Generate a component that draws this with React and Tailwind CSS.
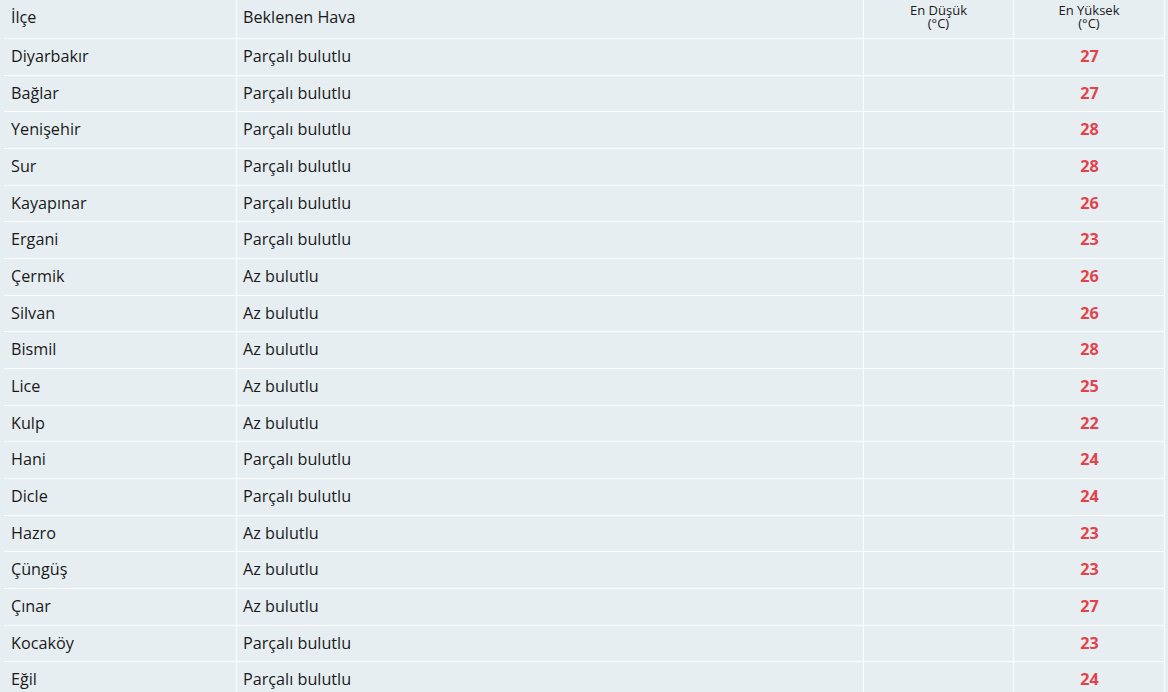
const rows = [
  ['Diyarbakır', 'Parçalı bulutlu', 27],
  ['Bağlar', 'Parçalı bulutlu', 27],
  ['Yenişehir', 'Parçalı bulutlu', 28],
  ['Sur', 'Parçalı bulutlu', 28],
  ['Kayapınar', 'Parçalı bulutlu', 26],
  ['Ergani', 'Parçalı bulutlu', 23],
  ['Çermik', 'Az bulutlu', 26],
  ['Silvan', 'Az bulutlu', 26],
  ['Bismil', 'Az bulutlu', 28],
  ['Lice', 'Az bulutlu', 25],
  ['Kulp', 'Az bulutlu', 22],
  ['Hani', 'Parçalı bulutlu', 24],
  ['Dicle', 'Parçalı bulutlu', 24],
  ['Hazro', 'Az bulutlu', 23],
  ['Çüngüş', 'Az bulutlu', 23],
  ['Çınar', 'Az bulutlu', 27],
  ['Kocaköy', 'Parçalı bulutlu', 23],
  ['Eğil', 'Parçalı bulutlu', 24],
];

const cell = 'border-r border-b border-white flex items-center';

function TempHead({ label }) {
  return (
    <div className={`${cell} h-[39px] flex-col justify-center pb-[4px] text-center text-[13px]`}>
      <div className="h-[13px] leading-[13px]">{label}</div>
      <div className="h-[13px] leading-[13px]">(°C)</div>
    </div>
  );
}

export default function App() {
  return (
    <div
      className="h-[692px] overflow-hidden bg-[#e7eef1] pl-1 text-[#1a1a1a]"
      style={{ fontFamily: '"Open Sans", "Liberation Sans", sans-serif' }}
    >
      <div className="grid grid-cols-[233px_627px_150px_151px]">
        <div className={`${cell} h-[39px] pb-[4px] pl-[7px] text-[16.2px]`}>İlçe</div>
        <div className={`${cell} h-[39px] pb-[4px] pl-[6px] text-[16.2px]`}>Beklenen Hava</div>
        <TempHead label="En Düşük" />
        <TempHead label="En Yüksek" />

        {rows.map(([name, sky, hi]) => (
          <div key={name} className="contents">
            <div className={`${cell} h-[36.67px] pb-[1px] pl-[7px] text-[16.2px]`}>{name}</div>
            <div className={`${cell} h-[36.67px] pb-[1px] pl-[6px] text-[16.2px]`}>{sky}</div>
            <div className={`${cell} h-[36.67px]`}></div>
            <div className={`${cell} h-[36.67px] justify-center pb-[1px] pl-[1px] text-[16.2px] font-bold text-[#e2434b]`}>
              {hi}
            </div>
          </div>
        ))}
      </div>
    </div>
  );
}
